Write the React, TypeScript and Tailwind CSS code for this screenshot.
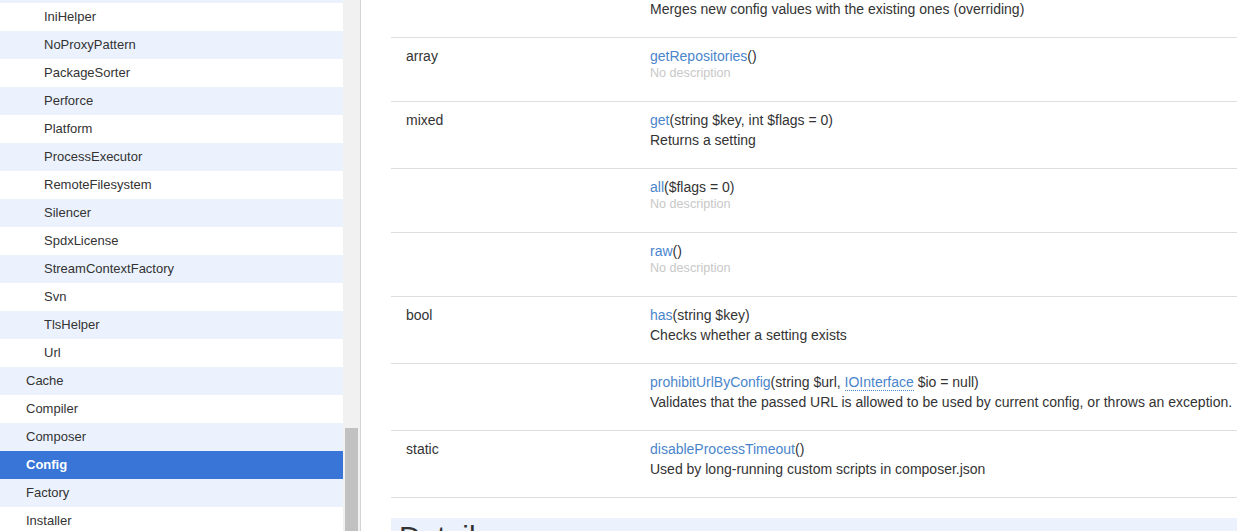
import React from 'react';

type NavItem = { name: string; level: 1 | 2; active?: boolean };

const navItems: NavItem[] = [
  { name: 'HttpDownloader', level: 2 },
  { name: 'IniHelper', level: 2 },
  { name: 'NoProxyPattern', level: 2 },
  { name: 'PackageSorter', level: 2 },
  { name: 'Perforce', level: 2 },
  { name: 'Platform', level: 2 },
  { name: 'ProcessExecutor', level: 2 },
  { name: 'RemoteFilesystem', level: 2 },
  { name: 'Silencer', level: 2 },
  { name: 'SpdxLicense', level: 2 },
  { name: 'StreamContextFactory', level: 2 },
  { name: 'Svn', level: 2 },
  { name: 'TlsHelper', level: 2 },
  { name: 'Url', level: 2 },
  { name: 'Cache', level: 1 },
  { name: 'Compiler', level: 1 },
  { name: 'Composer', level: 1 },
  { name: 'Config', level: 1, active: true },
  { name: 'Factory', level: 1 },
  { name: 'Installer', level: 1 },
  { name: 'InstalledVersions', level: 1 },
];

type Method = {
  type: string;
  name: string;
  args: React.ReactNode;
  desc?: string;
};

const methods: Method[] = [
  {
    type: 'void',
    name: 'merge',
    args: '(array $config, string $source = Config::SOURCE_UNKNOWN)',
    desc: 'Merges new config values with the existing ones (overriding)',
  },
  { type: 'array', name: 'getRepositories', args: '()' },
  { type: 'mixed', name: 'get', args: '(string $key, int $flags = 0)', desc: 'Returns a setting' },
  { type: '', name: 'all', args: '($flags = 0)' },
  { type: '', name: 'raw', args: '()' },
  { type: 'bool', name: 'has', args: '(string $key)', desc: 'Checks whether a setting exists' },
  {
    type: '',
    name: 'prohibitUrlByConfig',
    args: (
      <>
        (string $url,{' '}
        <abbr className="text-[#4a85cc] no-underline border-b border-dotted border-[#4a85cc] cursor-help">
          IOInterface
        </abbr>{' '}
        $io = null)
      </>
    ),
    desc: 'Validates that the passed URL is allowed to be used by current config, or throws an exception.',
  },
  {
    type: 'static',
    name: 'disableProcessTimeout',
    args: '()',
    desc: 'Used by long-running custom scripts in composer.json',
  },
];

const Sidebar = () => (
  <div className="flex w-[361px] shrink-0 h-full border-r border-[#d4d4d4]">
    <div className="w-[343px] h-full overflow-hidden">
      <ul className="-mt-[25px]">
        {navItems.map((item, i) => (
          <li
            key={item.name}
            className={`h-[28px] leading-[28px] text-[13px] whitespace-nowrap ${
              item.level === 2 ? 'pl-[44px]' : 'pl-[26px]'
            } ${
              item.active
                ? 'bg-[#3875d7] text-white font-bold'
                : i % 2 === 0
                ? 'bg-[#ebf2fd] text-[#333]'
                : 'bg-white text-[#333]'
            }`}
          >
            {item.name}
          </li>
        ))}
      </ul>
    </div>
    {/* scrollbar */}
    <div className="w-[17px] h-full bg-[#f1f1f1] pt-[428px] px-[2px] overflow-hidden">
      <div className="h-[300px] bg-[#c1c1c1]" />
    </div>
  </div>
);

const MethodRow = ({ m }: { m: Method }) => (
  <div className={`flex border-t border-[#ddd] pt-[8px] ${m.desc ? 'pb-[18px]' : 'pb-[20px]'}`}>
    <div className="w-[259px] shrink-0 pl-[15px] text-[14px] leading-[20px] text-[#333]">{m.type}</div>
    <div className="flex-1 text-[14px] leading-[20px] text-[#333] whitespace-nowrap">
      <div>
        <a className="text-[#4a85cc]" href="#">
          {m.name}
        </a>
        {m.args}
      </div>
      {m.desc ? (
        <p>{m.desc}</p>
      ) : (
        <p className="text-[12.6px] leading-[15px] text-[#c8c8c8]">No description</p>
      )}
    </div>
  </div>
);

export default function App() {
  return (
    <div
      className="flex w-[1237px] h-[531px] overflow-hidden bg-white text-[#333]"
      style={{ fontFamily: '"Liberation Sans", Arial, Helvetica, sans-serif' }}
    >
      <Sidebar />
      <div className="flex-1 min-w-0 h-full overflow-hidden pl-[30px]">
        <div className="-mt-[30px] w-[900px]">
          <div className="border-b border-[#ddd]">
            {methods.map((m) => (
              <MethodRow key={m.name} m={m} />
            ))}
          </div>
          <h2 className="mt-[20px] bg-[#ebf2fd] pl-[8px] pt-[2px] pb-[8px] text-[30px] leading-[33px] text-[#333]">
            Details
          </h2>
        </div>
      </div>
    </div>
  );
}
